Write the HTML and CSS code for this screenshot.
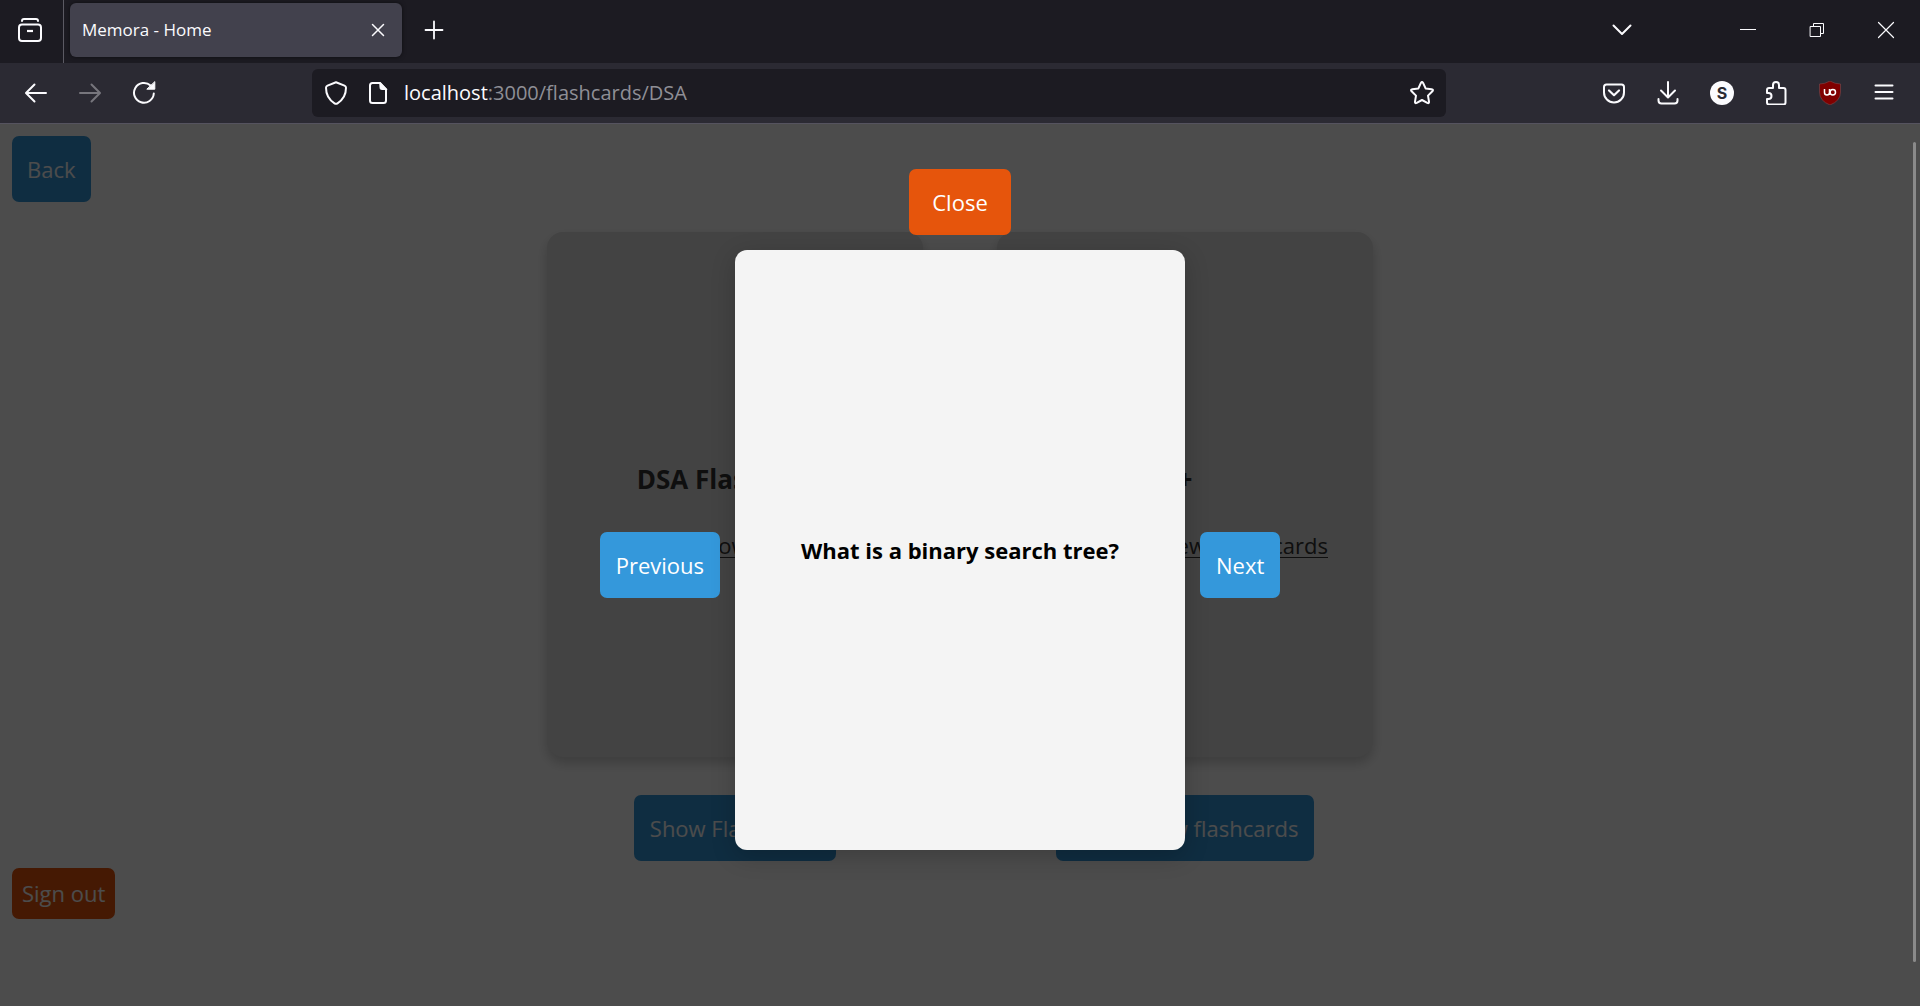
FILE: index.html
```html
<!DOCTYPE html>
<html lang="en">
<head>
<meta charset="utf-8">
<title>Memora - Home</title>
<link rel="stylesheet" href="styles.css">
</head>
<body>
<header class="chrome">
  <div class="tab-strip">
    <button class="history-btn" aria-label="View recent browsing">
      <svg class="icon" width="24" height="24" viewBox="0 0 24 24"><path d="M4 2.500q0-2 2-2h12q2 0 2 2" transform="translate(0 .5)"/><rect x="1" y="6.500" width="22" height="16.500" rx="3"/><path d="M9 13h6" stroke-width="2.200" stroke-linecap="butt"/></svg>
    </button>
    <div class="tab">
      <span>Memora - Home</span>
      <button class="tab-close" aria-label="Close tab"><svg class="icon" width="14" height="14" viewBox="0 0 14 14"><path d="M1.500 1.500l11 11M12.500 1.500l-11 11" stroke-width="1.500"/></svg></button>
    </div>
    <button class="tool" aria-label="New tab"><svg class="icon" width="20" height="20" viewBox="0 0 20 20"><path d="M10 1.500v17M1.500 10h17" stroke-width="1.800"/></svg></button>
    <div class="window-buttons">
      <button class="tool list-tabs" aria-label="List all tabs"><svg class="icon" width="20" height="20" viewBox="0 0 20 20"><path d="M1.500 5.500l8.500 8.500 8.500-8.500"/></svg></button>
      <button class="win" aria-label="Minimize"><svg class="icon" width="16" height="16" viewBox="0 0 16 16"><path d="M0 7.500h16" stroke-width="1"/></svg></button>
      <button class="win" aria-label="Restore"><svg class="icon" width="16" height="16" viewBox="0 0 16 16"><path d="M1.500 4.500h10v10h-10zM4.500 4.500v-3h10v10h-3" stroke-width="1" stroke-linejoin="miter"/></svg></button>
      <button class="win" aria-label="Close"><svg class="icon" width="18" height="18" viewBox="0 0 18 18"><path d="M1.500 1.500l15 15M16.500 1.500l-15 15" stroke-width="1.200"/></svg></button>
    </div>
  </div>
  <nav class="toolbar">
    <button class="tool" aria-label="Back"><svg class="icon" width="24" height="24" viewBox="0 0 24 24"><path d="M22 12H2.500M10.500 3.500L2 12l8.500 8.500"/></svg></button>
    <button class="tool dim" aria-label="Forward"><svg class="icon" width="24" height="24" viewBox="0 0 24 24"><path d="M2 12h19.500M13.500 3.500L22 12l-8.500 8.500"/></svg></button>
    <button class="tool" aria-label="Reload"><svg class="icon" width="24" height="24" viewBox="0 0 24 24"><path d="M21.800 12.500a9.900 9.900 0 1 1-3.200-8"/><path class="solid" d="M22.800 1v7.200h-7.600z"/></svg></button>
    <div class="url-bar">
      <button class="shield" aria-label="Tracking protection"><svg class="icon" width="24" height="24" viewBox="0 0 24 24"><path d="M12 1.200L20.500 4.600q1.500.6 1.500 2.200Q22 17 13.500 22.300q-1.500.9-3 0Q2 17 2 6.800q0-1.600 1.500-2.200z"/></svg></button>
      <button class="page-info" aria-label="Site information"><svg class="icon" width="24" height="24" viewBox="0 0 24 24"><path d="M14 2H6.500Q4 2 4 4.500v15Q4 22 6.500 22h11q2.500 0 2.500-2.500V8.500z"/><path class="solid" d="M14 1.500l7 7h-5.500q-1.500 0-1.500-1.500z"/></svg></button>
      <div class="url"><strong>localhost</strong>:3000/flashcards/DSA</div>
      <button class="bookmark" aria-label="Bookmark this page"><svg class="icon" width="24" height="24" viewBox="0 0 24 24"><path d="M10.900 1.900q1.100-1.900 2.200 0l2.500 5.500 6 .8q2.200.4.800 2.100l-4.400 4.300 1 6q.2 2.200-1.700 1.300L12 19l-5.300 2.900q-1.900.9-1.700-1.300l1-6-4.400-4.300q-1.400-1.700.8-2.100l6-.8z"/></svg></button>
    </div>
    <button class="tool" aria-label="Save to Pocket"><svg class="icon" width="24" height="24" viewBox="0 0 24 24"><path d="M4.500 3.500h15q2.500 0 2.500 2.500v5.500a10 10 0 0 1-20 0V6q0-2.500 2.500-2.500z"/><path d="M7 9.500l5 4.700 5-4.700" stroke-width="2.200"/></svg></button>
    <button class="tool" aria-label="Downloads"><svg class="icon" width="24" height="24" viewBox="0 0 24 24"><path d="M12 1v15M5 9.500l7 7 7-7M2.500 18v1.500q0 3 3 3h13q3 0 3-3V18"/></svg></button>
    <button class="tool" aria-label="Account"><span class="avatar">S</span></button>
    <button class="tool" aria-label="Extensions"><svg class="icon" width="24" height="24" viewBox="0 0 24 24"><path d="M3 12V9q0-2 2-2h4V4a3 3 0 0 1 6 0v3h4.500q2 0 2 2v12.500q0 2-2 2H5q-2 0-2-2V18h1.500a3 3 0 0 0 0-6z"/></svg></button>
    <button class="tool" aria-label="uBlock Origin"><svg width="24" height="24" viewBox="0 0 24 24"><path d="M12 0q5 3 10.500 3v8Q22.500 20 12 24 1.500 20 1.500 11V3Q7 3 12 0z" fill="#800000" stroke="#7a4a4e" stroke-width=".6"/><path d="M6.500 8v3.500a2.500 2.500 0 0 0 5 0V8M11.800 14V9" fill="none" stroke="#fff" stroke-width="1.500"/><circle cx="14.800" cy="11.200" r="2.700" fill="none" stroke="#fff" stroke-width="1.500"/></svg></button>
    <button class="tool" aria-label="Menu"><svg class="icon" width="24" height="24" viewBox="0 0 24 24"><path d="M3.500 4.500h17M3.500 11h17M3.500 17.500h17"/></svg></button>
  </nav>
</header>
<div class="page">
  <button class="btn back">Back</button>
  <main class="decks">
    <section class="deck">
      <div class="card">
        <h2>DSA Flashcards</h2>
        <a class="deck-link show" href="#">Show Flashcards</a>
      </div>
      <button class="btn">Show Flashcards</button>
    </section>
    <section class="deck">
      <div class="card">
        <h2>+</h2>
        <a class="deck-link create" href="#">Create new &nbsp; flashcards</a>
      </div>
      <button class="btn">Create new flashcards</button>
    </section>
  </main>
  <button class="btn sign-out">Sign out</button>
  <div class="overlay" role="dialog" aria-label="Flashcard">
    <button class="btn close">Close</button>
    <div class="viewer">
      <button class="btn">Previous</button>
      <article class="flashcard"><h3>What is a binary search tree?</h3></article>
      <button class="btn">Next</button>
    </div>
    <div class="scroll-thumb"></div>
  </div>
</div>
</body>
</html>
```
FILE: styles.css
```css
* { box-sizing: border-box; }

body {
  margin: 0;
  min-height: 100vh;
  display: flex;
  flex-direction: column;
  font: 22px/36px "Open Sans", "Noto Sans", sans-serif;
  background: #fff;
}

button {
  font: inherit;
  border: 0;
  padding: 0;
  background: none;
  color: inherit;
}

/* Browser window */
.chrome { color: #fbfbfe; background: #2b2a33; border-bottom: 1px solid #55535f; }
.chrome button { display: flex; align-items: center; justify-content: center; }

.icon {
  fill: none;
  stroke: currentColor;
  stroke-width: 2;
  stroke-linecap: round;
  stroke-linejoin: round;
}
.icon .solid { fill: currentColor; stroke-width: 1; }

.tab-strip {
  display: flex;
  align-items: center;
  height: 63px;
  padding-bottom: 3px;
  background: #1c1b22;
}
.chrome .history-btn {
  align-self: flex-start;
  flex: none;
  width: 64px;
  height: 63px;
  padding: 0 4px 3px 0;
  border-right: 1px solid #5b5a63;
}
.tab {
  display: flex;
  align-items: center;
  justify-content: space-between;
  width: 332px;
  height: 54px;
  margin: 0 5px 0 6px;
  padding: 0 10px 0 12px;
  border-radius: 6px;
  background: #42414d;
  box-shadow: 0 0 4px #0008;
  font-size: 17px;
}
.tab-close { width: 28px; height: 28px; }
.tool { width: 54px; height: 48px; }
.dim { color: #77767d; }
.window-buttons { display: flex; margin-left: auto; }
.list-tabs { margin-right: 64px; }
.win { width: 69px; height: 48px; }

.toolbar { display: flex; align-items: center; height: 60px; padding: 0 9px; }
.url-bar {
  display: flex;
  align-items: center;
  flex: 1;
  height: 48px;
  margin: 0 141px;
  border-radius: 6px;
  background: #1c1b22;
}
.shield, .bookmark { width: 48px; height: 48px; }
.page-info { width: 36px; height: 48px; }
.url { flex: 1; padding-left: 8px; font-size: 20px; color: #8f8f96; }
.url strong { font-weight: 400; color: #fbfbfe; }
.avatar {
  width: 24px;
  height: 24px;
  border-radius: 50%;
  background: #fbfbfe;
  color: #2b2a33;
  font: bold 16px/24px Inter, sans-serif;
}

/* Page */
.page {
  position: relative;
  flex: 1;
  display: flex;
  flex-direction: column;
  align-items: flex-start;
  padding: 12px;
}
.btn {
  padding: 15px 16px;
  border-radius: 7px;
  background: #3498db;
  color: #fff;
}
.back { padding: 15px; }
.decks {
  display: flex;
  justify-content: center;
  gap: 74px;
  width: 100%;
  margin-top: 30px;
}
.deck { display: flex; flex-direction: column; align-items: center; gap: 38px; }
.card {
  display: flex;
  flex-direction: column;
  justify-content: center;
  width: 376px;
  height: 525px;
  padding-top: 34px;
  border-radius: 16px;
  background: #dfdfdf;
  box-shadow: 0 6px 12px rgba(0, 0, 0, .2);
  color: #333;
}
.card h2 { margin: 0 0 30px; font-size: 26px; text-align: center; }
.deck-link {
  align-self: flex-end;
  color: inherit;
  text-underline-offset: 3px;
  text-decoration-thickness: 1px;
}
.show { margin-right: 60px; }
.create { margin-right: 45px; }
.sign-out { margin-top: 7px; padding: 7px 10px 8px; background: #e6550c; }

/* Flashcard viewer */
.overlay {
  position: absolute;
  inset: 0;
  display: flex;
  flex-direction: column;
  align-items: center;
  gap: 15px;
  padding-top: 45px;
  background: rgba(0, 0, 0, .7);
}
.close { padding: 15px 23px; background: #e6550c; }
.viewer {
  display: grid;
  grid-template-columns: 1fr auto 1fr;
  align-items: center;
  gap: 15px;
}
.viewer .btn { margin-top: 30px; justify-self: start; }
.viewer .btn:first-child { justify-self: end; }
.flashcard {
  display: flex;
  align-items: center;
  justify-content: center;
  width: 450px;
  height: 600px;
  border-radius: 12px;
  background: #f4f4f4;
  box-shadow: 0 6px 24px rgba(0, 0, 0, .2);
}
.flashcard h3 { margin: 0; font-size: 22px; color: #000; }
.scroll-thumb {
  position: absolute;
  top: 18px;
  right: 4px;
  bottom: 44px;
  width: 3px;
  border-radius: 2px;
  background: #8a8a8a;
}
```
